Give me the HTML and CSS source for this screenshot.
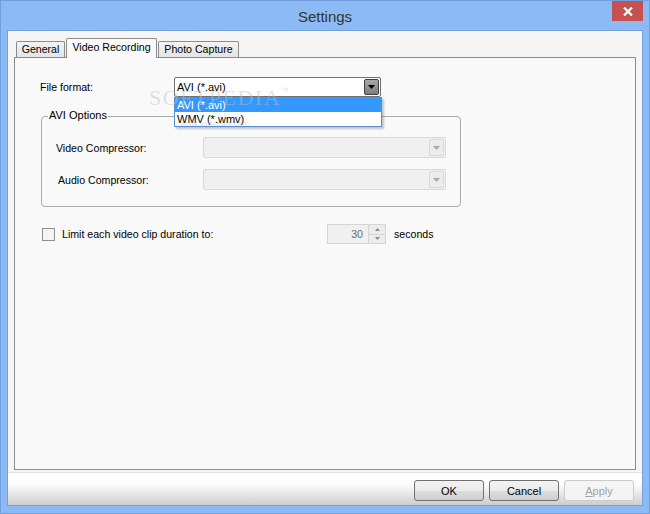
FILE: index.html
```html
<!DOCTYPE html>
<html>
<head>
<meta charset="utf-8">
<title>Settings</title>
<link rel="stylesheet" href="styles.css">
</head>
<body>
<div class="window">
  <div class="titlebar">
    <div class="title">Settings</div>
    <div class="close">
      <svg width="10" height="9" viewBox="0 0 10 9"><path d="M1 0.5 L9 8.5 M9 0.5 L1 8.5" stroke="#fff" stroke-width="2.2" fill="none"/></svg>
    </div>
  </div>
  <div class="client">
    <div class="tabarea">
      <div class="tabs">
        <div class="tab t-general">General</div>
        <div class="tab t-video active">Video Recording</div>
        <div class="tab t-photo">Photo Capture</div>
      </div>
      <div class="panel">
        <div class="row fmt-row">
          <span class="lbl fmt-lbl">File format:</span>
          <div class="combo main">
            <span class="val">AVI (*.avi)</span>
            <span class="ddbtn dark">
              <svg width="7" height="4" viewBox="0 0 7 4"><path d="M0 0 H7 L3.5 4 Z" fill="#000"/></svg>
            </span>
            <div class="droplist">
              <div class="opt sel">AVI (*.avi)</div>
              <div class="opt">WMV (*.wmv)</div>
            </div>
          </div>
          <div class="watermark">SOFTPEDIA<sup>™</sup></div>
          <div class="wm-url">www.softpedia.com</div>
        </div>
        <div class="group">
          <span class="legend">AVI Options</span>
          <div class="row grp-row">
            <span class="lbl grp-lbl">Video Compressor:</span>
            <div class="combo dis">
              <span class="ddbtn light">
                <svg width="7" height="4" viewBox="0 0 7 4"><path d="M0 0 H7 L3.5 4 Z" fill="#ababab"/></svg>
              </span>
            </div>
          </div>
          <div class="row grp-row second">
            <span class="lbl grp-lbl shift">Audio Compressor:</span>
            <div class="combo dis">
              <span class="ddbtn light">
                <svg width="7" height="4" viewBox="0 0 7 4"><path d="M0 0 H7 L3.5 4 Z" fill="#ababab"/></svg>
              </span>
            </div>
          </div>
        </div>
        <div class="row limit-row">
          <span class="check"></span>
          <span class="lbl limit-lbl">Limit each video clip duration to:</span>
          <div class="spin">
            <span class="spin-val">30</span>
            <span class="spin-btns">
              <span class="sb">
                <svg width="5" height="3" viewBox="0 0 5 3"><path d="M0 3 H5 L2.5 0 Z" fill="#8a8a8a"/></svg>
              </span>
              <span class="sb">
                <svg width="5" height="3" viewBox="0 0 5 3"><path d="M0 0 H5 L2.5 3 Z" fill="#8a8a8a"/></svg>
              </span>
            </span>
          </div>
          <span class="lbl secs">seconds</span>
        </div>
      </div>
    </div>
    <div class="buttonbar">
      <button class="btn">OK</button>
      <button class="btn">Cancel</button>
      <button class="btn disabled"><u>A</u>pply</button>
    </div>
  </div>
</div>
</body>
</html>
```

FILE: styles.css
```css
html, body {
  margin: 0;
  padding: 0;
}
body {
  width: 650px;
  height: 514px;
  overflow: hidden;
  font-family: "Liberation Sans", Arial, sans-serif;
  font-size: 10.6px;
  color: #000;
}
.window {
  box-sizing: border-box;
  width: 650px;
  height: 514px;
  background: #8bbaf4;
  border: 1px solid #6f9fdc;
  padding: 0 6px 7px 6px;
  display: flex;
  flex-direction: column;
}
.titlebar {
  height: 29px;
  display: grid;
  grid-template-columns: 1fr auto 1fr;
  flex: none;
}
.title {
  grid-column: 2;
  font-size: 15px;
  line-height: 31px;
  color: #333;
}
.close {
  grid-column: 3;
  justify-self: end;
  align-self: start;
  width: 31px;
  height: 20px;
  background: #c75050;
  display: flex;
  align-items: center;
  justify-content: center;
}
.close svg { display: block; }
.client {
  flex: 1;
  background: #f5f5f5;
  border: 1px solid #74a2dc;
  display: flex;
  flex-direction: column;
}
.tabarea {
  padding: 7px 6px 0 6px;
  flex: none;
}
.tabs {
  height: 19px;
  display: flex;
  align-items: flex-end;
  padding-left: 2px;
  position: relative;
  z-index: 1;
}
.tab {
  box-sizing: border-box;
  height: 16px;
  border: 1px solid #8c8c8c;
  border-bottom: none;
  border-radius: 2px 2px 0 0;
  background: linear-gradient(#f3f3f3, #e4e4e4);
  line-height: 15px;
  text-align: center;
  white-space: nowrap;
  margin-right: 1px;
}
.t-general { width: 49px; }
.t-video { width: 91px; }
.t-photo { width: 81px; }
.tab.active {
  height: 20px;
  margin-bottom: -1px;
  background: #f9f9f9;
  line-height: 17px;
}
.panel {
  box-sizing: border-box;
  height: 413px;
  border: 1px solid #8c8c8c;
  background: #f9f9f9;
  padding: 0 0 0 25px;
  margin-bottom: 2px;
}
.row {
  display: flex;
  align-items: center;
}
.fmt-row {
  margin-top: 19px;
  height: 20px;
  position: relative;
}
.fmt-lbl { width: 134px; flex: none; }
.combo {
  box-sizing: border-box;
  position: relative;
  display: flex;
  align-items: center;
  flex: none;
}
.combo.main {
  width: 207px;
  height: 20px;
  border: 1px solid #707070;
  border-radius: 2px;
  background: #fff;
  padding: 0 1px 0 2px;
  font-size: 11px;
}
.combo .val { flex: 1; line-height: 18px; }
.ddbtn {
  box-sizing: border-box;
  width: 15px;
  height: 16px;
  display: flex;
  align-items: center;
  justify-content: center;
  border-radius: 2px;
  flex: none;
}
.ddbtn svg { display: block; }
.ddbtn.dark {
  border: 1px solid #3f3f3f;
  background: linear-gradient(#a8a8a8, #7d7d7d);
}
.droplist {
  position: absolute;
  top: 19px;
  left: -1px;
  width: 208px;
  box-sizing: border-box;
  border: 1px solid #5b8fd6;
  background: #fff;
  box-shadow: 2px 2px 2px rgba(0, 0, 0, 0.22);
  z-index: 5;
}
.opt {
  height: 14px;
  line-height: 14px;
  padding-left: 2px;
  white-space: nowrap;
}
.opt.sel {
  background: #3399ff;
  color: #fff;
}
.watermark {
  position: absolute;
  left: 109px;
  top: 8px;
  font-family: "Liberation Serif", "Times New Roman", serif;
  font-size: 22px;
  letter-spacing: 1.5px;
  color: rgba(190, 190, 190, 0.45);
  z-index: 6;
  pointer-events: none;
  white-space: nowrap;
}
.watermark sup {
  font-size: 8px;
  letter-spacing: 0;
  vertical-align: 12px;
}
.wm-url {
  position: absolute;
  left: 140px;
  top: 42px;
  font-size: 8px;
  color: rgba(170, 170, 170, 0.45);
  z-index: 6;
  white-space: nowrap;
}
.group {
  position: relative;
  box-sizing: border-box;
  width: 420px;
  margin: 19px 0 0 1px;
  border: 1px solid #a9a9a9;
  border-radius: 4px;
  padding: 20px 14px 16px 14px;
}
.legend {
  position: absolute;
  left: 6px;
  top: -8px;
  line-height: 13px;
  padding: 0 1px;
  background: #f9f9f9;
  font-size: 11px;
}
.grp-row { height: 21px; }
.grp-row.second { margin-top: 11px; }
.grp-lbl { width: 147px; flex: none; }
.grp-lbl.shift { padding-left: 2px; box-sizing: border-box; }
.combo.dis {
  width: 243px;
  height: 21px;
  border: 1px solid #d9d9d9;
  border-radius: 2px;
  background: #f0f0f0;
  justify-content: flex-end;
  padding-right: 1px;
}
.ddbtn.light {
  height: 17px;
  border: 1px solid #dadada;
  background: #ececec;
}
.limit-row {
  margin-top: 17px;
  height: 20px;
}
.check {
  box-sizing: border-box;
  width: 13px;
  height: 13px;
  margin-left: 2px;
  border: 1px solid #8e8e8e;
  background: #f4f4f4;
  flex: none;
}
.limit-lbl {
  margin-left: 7px;
  width: 265px;
  flex: none;
}
.spin {
  box-sizing: border-box;
  width: 59px;
  height: 20px;
  border: 1px solid #d4d4d4;
  background: #f0f0f0;
  display: flex;
  flex: none;
}
.spin-val {
  flex: 1;
  text-align: right;
  line-height: 18px;
  color: #6d6d6d;
  padding-right: 5px;
}
.spin-btns {
  width: 16px;
  display: flex;
  flex-direction: column;
  border-left: 1px solid #d4d4d4;
}
.sb {
  flex: 1;
  display: flex;
  align-items: center;
  justify-content: center;
  background: #ececec;
}
.sb + .sb { border-top: 1px solid #d4d4d4; }
.sb svg { display: block; }
.secs { margin-left: 8px; }
.buttonbar {
  flex: 1;
  border-top: 1px solid #e4e4e4;
  background: linear-gradient(#ffffff 0%, #fdfdfd 35%, #cdcdcd 100%);
  display: flex;
  justify-content: flex-end;
  align-items: flex-start;
  gap: 5px;
  padding: 7px 8px 0 0;
}
.btn {
  box-sizing: border-box;
  width: 70px;
  height: 21px;
  margin: 0;
  padding: 0;
  border: 1px solid #707070;
  border-radius: 3px;
  background: linear-gradient(#f2f2f2 0%, #ebebeb 50%, #dddddd 51%, #cfcfcf 100%);
  font-family: "Liberation Sans", Arial, sans-serif;
  font-size: 11px;
  color: #000;
}
.btn.disabled {
  border-color: #cbcbcb;
  background: #f4f4f4;
  color: #a3a3a3;
}
```
